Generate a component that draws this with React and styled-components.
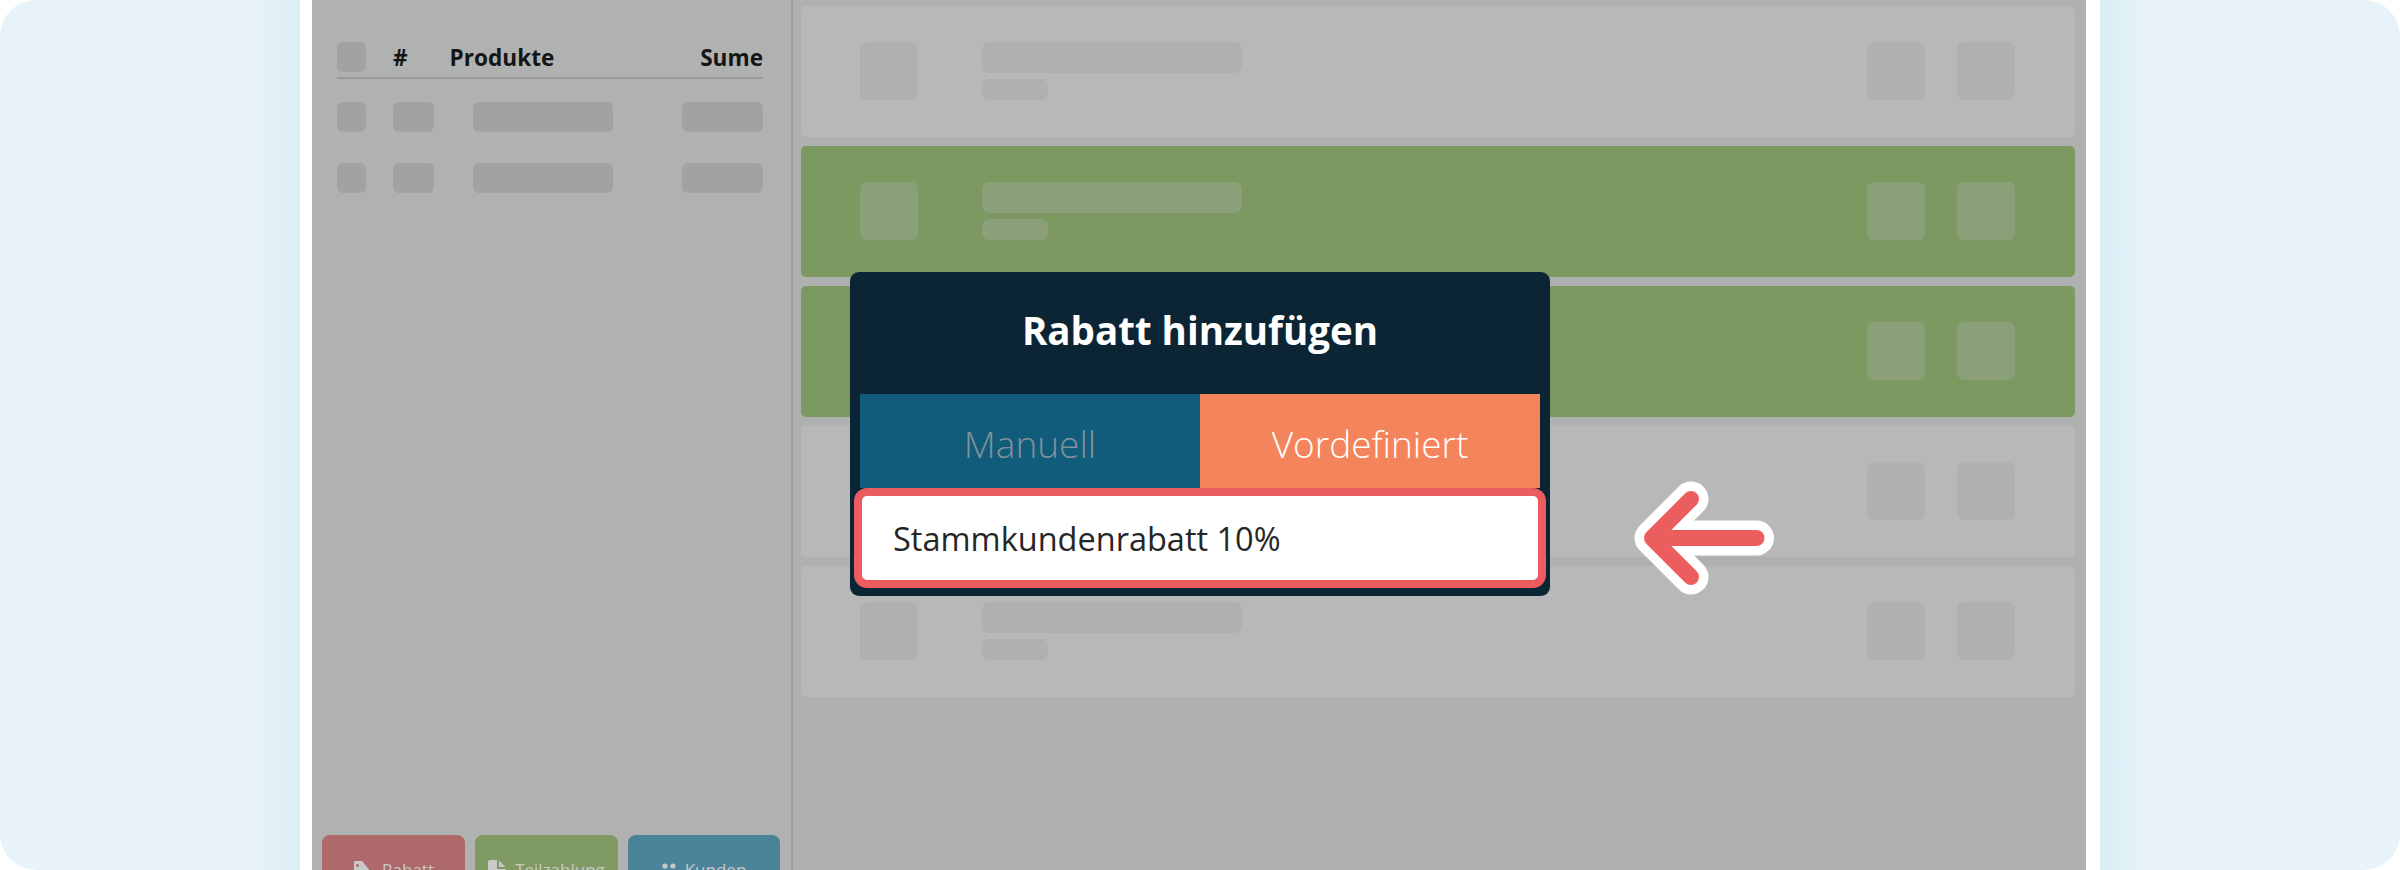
import React from 'react';
import styled, { createGlobalStyle } from 'styled-components';

const Global = createGlobalStyle`
  html, body { margin: 0; padding: 0; background: #fff; }
  * { box-sizing: border-box; }
  body { font-family: "Open Sans", "Liberation Sans", sans-serif; }
`;

const Frame = styled.div`
  position: relative;
  display: flex;
  width: 2400px;
  height: 870px;
  border-radius: 36px;
  overflow: hidden;
  background: #fff;
`;

const Band = styled.div`
  flex: 0 0 300px;
  background: linear-gradient(
    ${p => (p.$side === 'left' ? 'to right' : 'to left')},
    #e7f3f9 0,
    #e7f3f9 calc(100% - 42px),
    #d9edf5 100%
  );
`;

const AppWindow = styled.div`
  display: flex;
  width: 1774px;
  margin: 0 14px 0 12px;
  background: #b0b2b1;
`;

const Sidebar = styled.aside`
  flex: 0 0 481px;
  display: flex;
  flex-direction: column;
  height: 870px;
  padding-top: 42px;
  border-right: 2px solid #9c9e9d;
`;

const TableHead = styled.div`
  display: flex;
  align-items: center;
  height: 37px;
  margin: 0 28px 0 25px;
  padding-bottom: 6px;
  border-bottom: 2px solid #989a99;
  font-size: 22.6px;
  font-weight: 700;
  line-height: 30px;
  color: #141515;
`;

const Box = styled.div`
  flex: 0 0 auto;
  width: ${p => p.$w}px;
  height: ${p => p.$h || 29.5}px;
  margin-left: ${p => p.$ml || 0}px;
  border-radius: 6px;
  background: ${p => p.$c || '#a1a3a2'};
`;

const HeadCell = styled.span`
  flex: 0 0 auto;
  margin-top: 2px;
  margin-left: ${p => p.$ml || 0}px;
  ${p => (p.$end ? 'margin-left: auto;' : '')}
`;

const TableRow = styled.div`
  display: flex;
  margin: 23px 28px 0 25px;
  & + & { margin-top: 31.5px; }
`;

const Footer = styled.div`
  display: flex;
  gap: 10px;
  height: 35px;
  margin-top: auto;
  padding: 0 10px;
  overflow: hidden;
`;

const ActionButton = styled.div`
  flex: 0 0 ${p => p.$w}px;
  display: flex;
  justify-content: center;
  align-items: flex-start;
  gap: 9px;
  height: 90px;
  padding-top: 23px;
  border-radius: 8px;
  background: ${p => p.$bg};
  color: #c9c9c8;
  font-size: 17px;
  line-height: 23px;

  svg { flex: 0 0 auto; margin-top: ${p => p.$iconTop}px; }
`;

const Content = styled.main`
  flex: 1;
  display: flex;
  flex-direction: column;
  gap: 8.5px;
  padding: 5.7px 11px 0 8px;
  background: #afb1b0;
`;

const OrderRow = styled.div`
  display: flex;
  align-items: flex-start;
  flex: 0 0 131.5px;
  padding: 36px 60px 0 59px;
  border-radius: 5px;
  background: ${p => (p.$green ? '#7b9960' : '#b8b8b8')};
`;

const Thumb = styled.div`
  flex: 0 0 58px;
  height: 58px;
  border-radius: 7px;
  background: ${p => (p.$green ? '#8ba079' : '#b0b0b0')};
`;

const Lines = styled.div`
  display: flex;
  flex-direction: column;
  gap: 6px;
  margin-left: 64px;
`;

const Line = styled.div`
  width: ${p => p.$w}px;
  height: ${p => p.$h}px;
  border-radius: 7px;
  background: ${p => (p.$green ? '#8ba079' : '#b0b0b0')};
`;

const RowActions = styled.div`
  display: flex;
  gap: 32px;
  margin-left: auto;
`;

const Modal = styled.section`
  position: absolute;
  left: 850px;
  top: 272px;
  width: 700px;
  height: 324px;
  padding: 0 10px;
  border-radius: 9px;
  background: #0c2535;
`;

const Title = styled.h2`
  height: 122px;
  margin: 0;
  padding-top: 33px;
  text-align: center;
  font-size: 38.5px;
  font-weight: 700;
  line-height: 50px;
  color: #fff;
`;

const Tabs = styled.div`
  display: flex;
  height: 94px;
`;

const Tab = styled.div`
  flex: 1;
  display: flex;
  align-items: center;
  justify-content: center;
  padding-top: 4px;
  font-size: 37px;
  font-weight: 300;
  background: ${p => (p.$active ? '#f4845c' : '#115c7a')};
  color: ${p => (p.$active ? '#fff' : '#80929c')};
`;

const Field = styled.div`
  display: flex;
  align-items: center;
  height: 100px;
  margin: 0 -6px;
  padding: 0 0 0 31px;
  border: 8px solid #ea5c5d;
  border-radius: 13px;
  background: #fff;
  font-size: 32.5px;
  color: #262626;
`;

const Arrow = styled.svg`
  position: absolute;
  left: 1620px;
  top: 470px;
`;

const orderRows = [false, true, true, false, false];

const TagIcon = () => (
  <svg width="20" height="26" viewBox="0 0 20 26" fill="#c9c9c8">
    <path fillRule="evenodd" d="M1 0h8l10 12v14H1z M4.5 3a1.5 1.5 0 1 0 .01 0z" />
  </svg>
);

const FileIcon = () => (
  <svg width="18" height="26" viewBox="0 0 18 26" fill="#c9c9c8">
    <path d="M2 0h7v9h9v17H0V2a2 2 0 0 1 2-2z" />
    <path d="M11 .5L17.5 7H11z" />
  </svg>
);

const UsersIcon = () => (
  <svg width="14" height="24" viewBox="0 0 14 24" fill="#c9c9c8">
    <circle cx="3" cy="3" r="2.6" />
    <circle cx="11" cy="3" r="2.6" />
    <path d="M0 9h6v15H0zM8 9h6v15H8z" />
  </svg>
);

export default function App() {
  return (
    <>
      <Global />
      <Frame>
        <Band $side="left" />
        <AppWindow>
          <Sidebar>
            <TableHead>
              <Box $w={29} $h={30} />
              <HeadCell $ml={27}>#</HeadCell>
              <HeadCell $ml={42}>Produkte</HeadCell>
              <HeadCell $end>Sume</HeadCell>
            </TableHead>
            {[0, 1].map(i => (
              <TableRow key={i}>
                <Box $w={29} />
                <Box $w={41} $ml={27} />
                <Box $w={140} $ml={39} />
                <Box $w={81} $ml={69} />
              </TableRow>
            ))}
            <Footer>
              <ActionButton $w={143} $bg="#ae6a6b" $iconTop={3}>
                <TagIcon />
                Rabatt
              </ActionButton>
              <ActionButton $w={143} $bg="#7f9a63" $iconTop={2}>
                <FileIcon />
                Teilzahlung
              </ActionButton>
              <ActionButton $w={152} $bg="#4b8399" $iconTop={5}>
                <UsersIcon />
                Kunden
              </ActionButton>
            </Footer>
          </Sidebar>
          <Content>
            {orderRows.map((green, i) => (
              <OrderRow key={i} $green={green}>
                <Thumb $green={green} />
                <Lines>
                  <Line $w={260} $h={31} $green={green} />
                  <Line $w={66} $h={21} $green={green} />
                </Lines>
                <RowActions>
                  <Thumb $green={green} />
                  <Thumb $green={green} />
                </RowActions>
              </OrderRow>
            ))}
          </Content>
        </AppWindow>
        <Band $side="right" />
        <Modal>
          <Title>Rabatt hinzufügen</Title>
          <Tabs>
            <Tab>Manuell</Tab>
            <Tab $active>Vordefiniert</Tab>
          </Tabs>
          <Field>Stammkundenrabatt 10%</Field>
        </Modal>
        <Arrow width="180" height="140" viewBox="0 0 180 140" fill="none" strokeLinecap="round" strokeLinejoin="round">
          <path d="M136.5 68H32M71 29L32 68l39 39" stroke="#fff" strokeWidth="35" />
          <path d="M136.5 68H32M71 29L32 68l39 39" stroke="#ec5e5e" strokeWidth="16" />
        </Arrow>
      </Frame>
    </>
  );
}
